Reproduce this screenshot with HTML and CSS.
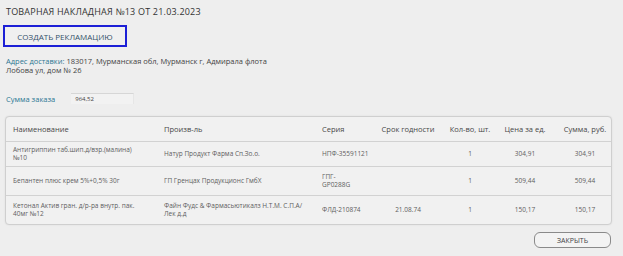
FILE: index.html
```html
<!DOCTYPE html>
<html lang="ru">
<head>
    <meta charset="UTF-8">
    <meta name="viewport" content="width=device-width, initial-scale=1.0">
    <title>Товарная накладная</title>
    <link rel="stylesheet" href="styles.css">
</head>
<body>
    <div class="page">
        <h1 class="title">ТОВАРНАЯ НАКЛАДНАЯ №13 ОТ 21.03.2023</h1>

        <button type="button" class="claim-btn">СОЗДАТЬ РЕКЛАМАЦИЮ</button>

        <p class="address">
            <span class="label">Адрес доставки:</span> 183017, Мурманская обл, Мурманск г, Адмирала флота<br>
            Лобова ул, дом № 26
        </p>

        <div class="sum-row">
            <span class="label">Сумма заказа</span>
            <span class="sum-field">964,52</span>
        </div>

        <div class="table-wrap">
            <table class="goods">
                <colgroup>
                    <col class="c-name">
                    <col class="c-maker">
                    <col class="c-series">
                    <col class="c-date">
                    <col class="c-qty">
                    <col class="c-price">
                    <col class="c-sum">
                </colgroup>
                <thead>
                    <tr>
                        <th>Наименование</th>
                        <th>Произв-ль</th>
                        <th>Серия</th>
                        <th class="center">Срок годности</th>
                        <th class="center">Кол-во, шт.</th>
                        <th class="center">Цена за ед.</th>
                        <th class="center">Сумма, руб.</th>
                    </tr>
                </thead>
                <tbody>
                    <tr class="row-short">
                        <td>Антигриппин таб.шип.д/взр.(малина) №10</td>
                        <td class="maker">Натур Продукт Фарма Сп.Зо.о.</td>
                        <td class="series">НПФ-35591121</td>
                        <td class="center"></td>
                        <td class="center">1</td>
                        <td class="center">304,91</td>
                        <td class="center">304,91</td>
                    </tr>
                    <tr>
                        <td>Бепантен плюс крем 5%+0,5% 30г</td>
                        <td class="maker">ГП Гренцах Продукционс ГмбХ</td>
                        <td class="series">ГПГ-GP0288G</td>
                        <td class="center"></td>
                        <td class="center">1</td>
                        <td class="center">509,44</td>
                        <td class="center">509,44</td>
                    </tr>
                    <tr>
                        <td>Кетонал Актив гран. д/р-ра внутр. пак. 40мг №12</td>
                        <td class="maker">Файн Фудс &amp; Фармасьютикалз Н.Т.М. С.П.А/ Лек д.д</td>
                        <td class="series">ФЛД-210874</td>
                        <td class="center">21.08.74</td>
                        <td class="center">1</td>
                        <td class="center">150,17</td>
                        <td class="center">150,17</td>
                    </tr>
                </tbody>
            </table>
        </div>

        <div class="footer">
            <button type="button" class="close-btn">ЗАКРЫТЬ</button>
        </div>
    </div>
</body>
</html>
```

FILE: styles.css
```css
body {
    margin: 0;
    padding: 0;
    background-color: #eeeeee;
    font-family: "Open Sans", "DejaVu Sans", sans-serif;
    color: #333;
}

.page {
    padding: 7px 12px 0 6px;
}

.title {
    margin: 0;
    font-size: 9px;
    font-weight: 400;
    line-height: 10px;
    letter-spacing: 0.2px;
    color: #333;
}

.claim-btn {
    display: block;
    margin: 8px 0 0 -3px;
    width: 124px;
    height: 22px;
    padding: 0;
    background-color: #f0f0f0;
    border: 2px solid #1c1fd6;
    color: #34506a;
    font-family: inherit;
    font-size: 8px;
    cursor: pointer;
}

.address {
    margin: 10px 0 0;
    font-size: 7.5px;
    line-height: 9px;
    color: #444;
}

.label {
    color: #2c7793;
}

.sum-row {
    display: flex;
    align-items: center;
    margin-top: 18px;
    font-size: 7.5px;
}

.sum-field {
    display: block;
    margin-left: 16px;
    width: 58px;
    height: 10px;
    padding-left: 4px;
    line-height: 11px;
    font-size: 6px;
    color: #444;
    background-color: #f2f2f2;
    border-top: 1px solid #d6d6d6;
    border-right: 1px solid #e6e6e6;
}

.table-wrap {
    margin: 12px 0 0 -1px;
    width: 605px;
    border: 1px solid #cfcfcf;
    border-radius: 4px;
    background-color: #f1f1f1;
    box-shadow: 0 0 2px rgba(0, 0, 0, 0.08);
    overflow: hidden;
}

.goods {
    width: 100%;
    border-collapse: collapse;
    table-layout: fixed;
}

.c-name { width: 151px; }
.c-maker { width: 158px; }
.c-series { width: 52px; }
.c-date { width: 82px; }
.c-qty { width: 42px; }
.c-price { width: 68px; }
.c-sum { width: auto; }

.goods th {
    height: 24px;
    padding: 0 7px;
    text-align: left;
    font-size: 7.5px;
    font-weight: 400;
    color: #484848;
    border-bottom: 1px solid #d2d2d2;
}

.goods td {
    padding: 0 14px 0 7px;
    font-size: 6.5px;
    line-height: 8px;
    color: #5e5e5e;
    vertical-align: middle;
    height: 28px;
    border-bottom: 1px solid #d2d2d2;
}

.goods .row-short td {
    height: 24px;
}

.goods tbody tr:last-child td {
    border-bottom: none;
}

.goods td.maker {
    padding-right: 2px;
}

.goods td.series {
    padding-right: 5px;
}

.goods .center {
    text-align: center;
    padding-left: 0;
    padding-right: 0;
}

.footer {
    display: flex;
    justify-content: flex-end;
    margin-top: 7px;
}

.close-btn {
    width: 77px;
    height: 16px;
    padding: 0;
    background-color: #f3f3f3;
    border: 1px solid #8a8a8a;
    border-radius: 6px;
    color: #444;
    font-family: inherit;
    font-size: 7px;
    cursor: pointer;
}
```
